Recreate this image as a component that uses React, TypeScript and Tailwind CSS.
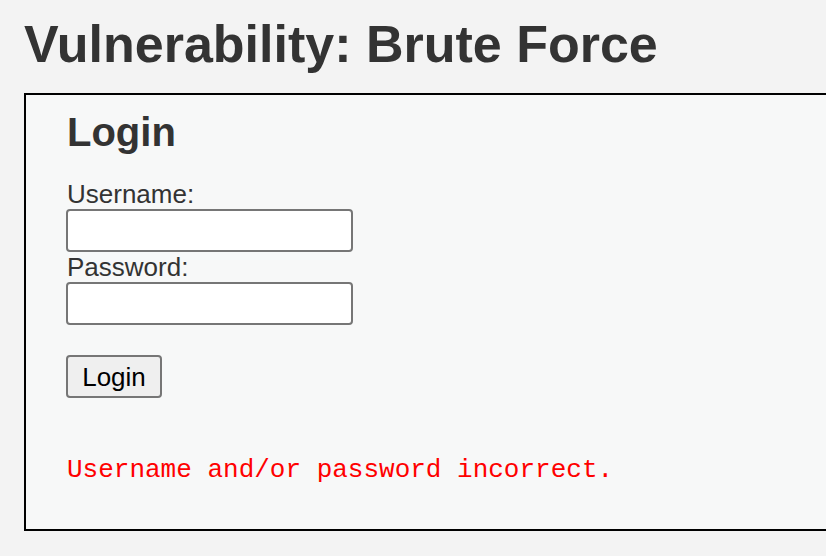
export default function App() {
  return (
    <div
      className="w-[826px] h-[556px] overflow-hidden bg-[#f3f3f3] pl-[24px] pt-[18px]"
      style={{ fontFamily: '"Liberation Sans", Arial, sans-serif' }}
    >
      <h1 className="text-[52px] leading-[52px] font-bold text-[#333333] whitespace-nowrap">
        Vulnerability: Brute Force
      </h1>
      <div className="mt-[23px] w-[900px] h-[438px] border-2 border-black bg-[#f7f8f8] pl-[40px] pt-[17px]">
        <h2 className="text-[40px] leading-[40px] font-bold text-[#333333] pl-[1px]">Login</h2>
        <form className="mt-[27px]" onSubmit={(e) => e.preventDefault()}>
          <div className="text-[26px] leading-[30px] text-[#333333] pl-[1px]">Username:</div>
          <input
            type="text"
            className="block w-[287px] h-[43px] bg-white border-2 border-[#767676] rounded-[4px]"
          />
          <div className="text-[26px] leading-[30px] text-[#333333] pl-[1px]">Password:</div>
          <input
            type="password"
            className="block w-[287px] h-[43px] bg-white border-2 border-[#767676] rounded-[4px]"
          />
          <button
            type="submit"
            className="mt-[30px] block w-[96px] h-[43px] bg-[#efefef] border-2 border-[#767676] rounded-[4px] text-[26px] leading-none text-black"
          >
            Login
          </button>
        </form>
        <pre
          className="mt-[57px] text-[26px] leading-[30px] text-[#ff0000] pl-[1px]"
          style={{ fontFamily: '"Liberation Mono", "Courier New", monospace' }}
        >
          Username and/or password incorrect.
        </pre>
      </div>
    </div>
  );
}
